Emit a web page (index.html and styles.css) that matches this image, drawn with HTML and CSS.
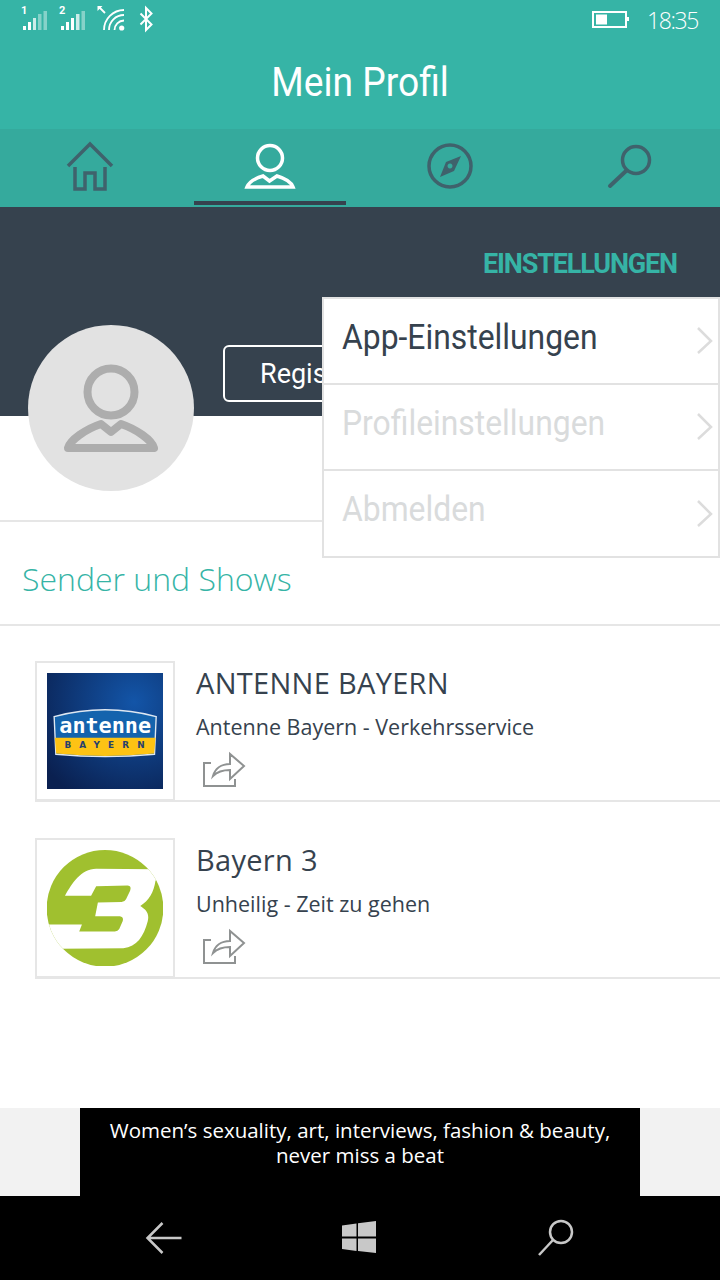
FILE: index.html
```html
<!DOCTYPE html>
<html lang="de">

<head>
    <meta charset="UTF-8">
    <meta name="viewport" content="width=device-width, initial-scale=1.0">
    <title>Mein Profil</title>
    <link rel="stylesheet" href="styles.css">
</head>

<body>
    <div class="page">
        <div class="top">
            <div class="status">
                <svg class="status-left" viewBox="0 0 160 40">
                    <g class="signal">
                        <text x="21" y="14">1</text>
                        <rect x="23" y="26" width="3" height="4" />
                        <rect x="28" y="22" width="3" height="8" />
                        <rect x="33" y="18" width="3" height="12" opacity=".75" />
                        <rect x="38" y="14" width="3.500" height="16" opacity=".4" />
                        <rect x="43.500" y="11" width="3.500" height="19" opacity=".4" />
                    </g>
                    <g class="signal">
                        <text x="59" y="14">2</text>
                        <rect x="61" y="26" width="3" height="4" />
                        <rect x="66" y="22" width="3" height="8" />
                        <rect x="71" y="18" width="3" height="12" />
                        <rect x="76" y="14" width="3.500" height="16" opacity=".75" />
                        <rect x="81.500" y="11" width="3.500" height="19" opacity=".4" />
                    </g>
                    <g fill="none" stroke="#fff" stroke-width="1.800">
                        <path d="M104 30a20 20 0 0 1 20-20" />
                        <path d="M109 30a15 15 0 0 1 15-15" />
                        <path d="M114.500 30a9.500 9.500 0 0 1 9.500-9.500" />
                        <path d="M105 13l-6-6" />
                        <path d="M140.500 13.500L151.500 24.500 146 30V8l5.500 5.500L140.500 24.500" stroke-width="2" />
                    </g>
                    <path d="M97.500 6h5l-5 5z" fill="#fff" />
                    <circle cx="121.700" cy="28" r="2.600" fill="#fff" />
                </svg>
                <div class="status-right">
                    <svg class="battery" viewBox="0 0 38 18">
                        <rect x="1" y="1" width="33" height="15" fill="none" stroke="#fff" stroke-width="2" />
                        <rect x="4" y="3.500" width="11" height="10" fill="#fff" />
                        <rect x="35" y="6" width="2" height="4" fill="#fff" />
                    </svg>
                    <span class="time">18:35</span>
                </div>
            </div>
            <h1 class="page-title">Mein Profil</h1>
        </div>

        <div class="tabs">
            <div class="tab">
                <svg viewBox="60 140 60 54" class="tab-icon dark">
                    <path d="M68 166l22-22 22 22" />
                    <path d="M75 167v22h10v-16h10v16h10v-22" />
                </svg>
            </div>
            <div class="tab active">
                <svg viewBox="240 140 60 54" class="tab-icon light">
                    <circle cx="270" cy="158" r="12.500" />
                    <path d="M247 187c2-5 9-9 16-11l6.500 5 7.500-5c7 2 14 6 16 11z" />
                </svg>
            </div>
            <div class="tab">
                <svg viewBox="420 140 60 54" class="tab-icon dark">
                    <circle cx="450" cy="166" r="21" />
                    <path class="needle" d="M461 156l-7 15-14 6 6-15zM450 163.500a2.500 2.500 0 1 0 .01 0z" />
                </svg>
            </div>
            <div class="tab">
                <svg viewBox="600 140 60 54" class="tab-icon dark">
                    <circle cx="636" cy="160" r="13.500" />
                    <path d="M626 171l-16 15" stroke-linecap="round" stroke-width="4" />
                </svg>
            </div>
        </div>

        <div class="profile">
            <div class="profile-head">
                <a class="settings-link">EINSTELLUNGEN</a>
                <button class="register">Registrieren</button>
            </div>
            <div class="avatar">
                <svg viewBox="0 0 166 166">
                    <circle cx="83" cy="67" r="23.500" />
                    <path d="M40 123c2-8 18-19 33-24l10 8 10-8c15 5 31 16 33 24z" />
                </svg>
            </div>
        </div>

        <h2 class="section-title">Sender und Shows</h2>

        <div class="shows">
            <div class="show">
                <div class="show-logo">
                    <svg viewBox="24 17 341 341">
                        <defs>
                            <radialGradient id="navy" cx="75%" cy="25%" r="95%">
                                <stop offset="0" stop-color="#1355a8" />
                                <stop offset="1" stop-color="#0a2050" />
                            </radialGradient>
                        </defs>
                        <rect x="24" y="17" width="341" height="341" fill="url(#navy)" />
                        <path d="M45 145Q195 105 345 145L340 256Q195 270 50 256Z" fill="#1463ad" stroke="#dfe8f2" stroke-width="4" />
                        <path d="M47 207H343L339 254Q195 268 51 254Z" fill="#fdc314" />
                        <text class="logo-word" x="195" y="192">antenne</text>
                        <text class="logo-sub" x="205" y="238">BAYERN</text>
                    </svg>
                </div>
                <div class="show-info">
                    <div class="show-name">ANTENNE BAYERN</div>
                    <div class="show-track">Antenne Bayern - Verkehrsservice</div>
                    <svg class="share" viewBox="200 750 48 38">
                        <path d="M211 762h-7v23h31v-7" />
                        <path d="M213 775c2-7 8-12 17-12v-10l14 12-14 13v-9c-8 0-13 2-17 6z" />
                    </svg>
                </div>
            </div>
            <div class="show">
                <div class="show-logo">
                    <svg viewBox="25 15 342 342">
                        <defs>
                            <clipPath id="disc">
                                <circle cx="196" cy="187" r="172" />
                            </clipPath>
                        </defs>
                        <circle cx="196" cy="187" r="172" fill="#a0c02f" />
                        <path clip-path="url(#disc)" fill="#fff" d="M340 72L170 70C125 72 100 110 78 150H155L170 122L262 120Q275 120 270 135L258 160Q254 168 245 168L175 170L167 210L240 210Q252 212 248 225L238 248Q234 255 225 255H120L128 235H20L60 306L250 305C290 300 310 270 322 225C328 200 315 190 300 180C325 165 340 140 345 105L400 90Z" />
                    </svg>
                </div>
                <div class="show-info">
                    <div class="show-name">Bayern 3</div>
                    <div class="show-track">Unheilig - Zeit zu gehen</div>
                    <svg class="share" viewBox="200 750 48 38">
                        <path d="M211 762h-7v23h31v-7" />
                        <path d="M213 775c2-7 8-12 17-12v-10l14 12-14 13v-9c-8 0-13 2-17 6z" />
                    </svg>
                </div>
            </div>
        </div>

        <div class="ad">
            <div class="ad-box">Women&rsquo;s sexuality, art, interviews, fashion &amp; beauty, never miss a beat</div>
        </div>

        <div class="navbar">
            <svg viewBox="0 0 40 40" class="nav-icon">
                <path d="M37.500 20H3.500M18.500 5L3.500 20l15 15" />
            </svg>
            <svg viewBox="0 0 40 40" class="nav-icon">
                <path class="win" d="M2 7.500L16.500 5.500V18.500H2zM18 5.300L36 3V18.500H18zM2 20.500H16.500V33L2 31zM18 20.500H36V35L18 33z" />
            </svg>
            <svg viewBox="0 0 40 40" class="nav-icon">
                <circle cx="25" cy="14" r="11" />
                <path d="M17 22L3 37" />
            </svg>
        </div>

        <div class="menu">
            <div class="menu-item">
                <span>App-Einstellungen</span>
                <svg class="chevron" viewBox="0 0 16 28"><path d="M1 1l13 13L1 26" /></svg>
            </div>
            <div class="menu-item off">
                <span>Profileinstellungen</span>
                <svg class="chevron" viewBox="0 0 16 28"><path d="M1 1l13 13L1 26" /></svg>
            </div>
            <div class="menu-item off">
                <span>Abmelden</span>
                <svg class="chevron" viewBox="0 0 16 28"><path d="M1 1l13 13L1 26" /></svg>
            </div>
        </div>
    </div>
</body>

</html>
```

FILE: styles.css
```css
body {
    margin: 0;
    background: #ffffff;
    font-family: "Open Sans", sans-serif;
}

.page {
    position: relative;
    display: flex;
    flex-direction: column;
    width: 720px;
    height: 1280px;
    overflow: hidden;
}

.top {
    height: 129px;
    background-color: #36b4a6;
}

.status {
    display: flex;
    justify-content: space-between;
    height: 40px;
}

.status-left {
    width: 160px;
    height: 40px;
}

.signal {
    fill: #ffffff;
}

.signal text {
    font-family: "Roboto", sans-serif;
    font-size: 11px;
    font-weight: 700;
}

.status-right {
    display: flex;
    align-items: center;
    gap: 17px;
    padding-right: 22px;
}

.battery {
    width: 38px;
    height: 18px;
}

.time {
    color: #ffffff;
    font-size: 23px;
    font-weight: 300;
    letter-spacing: -1.400px;
}

.page-title {
    margin: 0;
    color: #ffffff;
    font-family: "Roboto", sans-serif;
    font-size: 40px;
    font-weight: 400;
    line-height: 86px;
    text-align: center;
    transform: scaleX(0.93);
}

.tabs {
    display: grid;
    grid-template-columns: repeat(4, 1fr);
    height: 78px;
    background-color: #35aa9d;
    border-bottom: 1px solid #36424e;
}

.tab {
    display: flex;
    flex-direction: column;
    align-items: center;
    gap: 7px;
    padding-top: 11px;
}

.tab-icon {
    width: 60px;
    height: 54px;
    fill: none;
    stroke-width: 3.500;
}

.tab-icon.dark {
    stroke: #3f626c;
}

.tab-icon.light {
    stroke: #ffffff;
}

.needle {
    fill: #3f626c;
    stroke: none;
    fill-rule: evenodd;
}

.tab.active::after {
    content: "";
    width: 152px;
    height: 4px;
    background-color: #36424e;
}

.profile {
    position: relative;
    height: 312px;
    border-bottom: 2px solid #e6e6e6;
}

.profile-head {
    height: 208px;
    background-color: #36424e;
    overflow: hidden;
}

.settings-link {
    display: block;
    padding: 37px 43px 0 0;
    color: #36b4a6;
    font-family: "Roboto", sans-serif;
    font-size: 27px;
    font-weight: 700;
    letter-spacing: -1.150px;
    line-height: 38px;
    text-align: right;
}

.register {
    display: block;
    width: 220px;
    height: 57px;
    margin: 62px 0 0 223px;
    padding: 0 0 0 35px;
    background: none;
    border: 2px solid #ffffff;
    border-radius: 6px;
    color: #ffffff;
    font-family: "Roboto", sans-serif;
    font-size: 27px;
    text-align: left;
}

.avatar {
    position: absolute;
    top: 117px;
    left: 28px;
    width: 166px;
    height: 166px;
    background-color: #e2e2e2;
    border-radius: 50%;
}

.avatar svg {
    display: block;
    fill: none;
    stroke: #adadad;
    stroke-width: 8;
    stroke-linejoin: round;
}

.section-title {
    flex: none;
    box-sizing: border-box;
    height: 104px;
    margin: 0;
    padding-left: 22px;
    border-bottom: 2px solid #e6e6e6;
    color: #36b4a6;
    font-size: 32px;
    font-weight: 300;
    line-height: 114px;
}

.shows {
    display: flex;
    flex: 1;
    flex-direction: column;
    gap: 36px;
    padding: 35px 0 0 35px;
}

.show {
    display: flex;
    height: 141px;
    border-bottom: 2px solid #e6e6e6;
    box-sizing: border-box;
}

.show-logo {
    box-sizing: border-box;
    width: 140px;
    height: 141px;
    padding: 10px;
    border: 2px solid #e6e6e6;
    border-bottom-width: 3px;
}

.show-logo svg {
    display: block;
    width: 116px;
    height: 116px;
}

.logo-word {
    fill: #ffffff;
    font-family: "DejaVu Sans Mono", monospace;
    font-size: 64px;
    font-weight: 700;
    text-anchor: middle;
}

.logo-sub {
    fill: #27406e;
    font-family: "DejaVu Sans", sans-serif;
    font-size: 26px;
    font-weight: 700;
    letter-spacing: 24px;
    text-anchor: middle;
}

.show-info {
    display: flex;
    flex-direction: column;
    align-items: flex-start;
    padding-left: 21px;
    color: #36424e;
}

.show-name {
    margin-top: -1px;
    font-size: 29px;
    letter-spacing: 0.300px;
    line-height: 46px;
}

.show-track {
    margin-top: 6px;
    font-size: 21.500px;
    line-height: 30px;
}

.share {
    width: 48px;
    height: 38px;
    margin: 9px 0 0 4px;
    fill: none;
    stroke: #8f9292;
    stroke-width: 2;
}

.ad {
    display: flex;
    justify-content: center;
    height: 88px;
    background-color: #f2f2f2;
}

.ad-box {
    box-sizing: border-box;
    width: 560px;
    padding: 10px 20px 0;
    background-color: #000000;
    color: #ffffff;
    font-size: 20.500px;
    line-height: 25px;
    text-align: center;
}

.navbar {
    display: grid;
    grid-template-columns: repeat(3, 40px);
    justify-content: center;
    column-gap: 156px;
    align-items: center;
    height: 84px;
    background-color: #000000;
}

.nav-icon {
    width: 40px;
    height: 40px;
    fill: none;
    stroke: #c8c8c8;
    stroke-width: 2.500;
}

.win {
    fill: #c8c8c8;
    stroke: none;
}

.menu {
    position: absolute;
    top: 297px;
    left: 322px;
    box-sizing: border-box;
    width: 398px;
    background-color: #ffffff;
    border: 2px solid #e2e2e2;
}

.menu-item {
    display: flex;
    justify-content: space-between;
    align-items: center;
    height: 86px;
    box-sizing: border-box;
    padding: 0 5px 0 18px;
    border-bottom: 2px solid #e2e2e2;
    color: #36424e;
    font-family: "Roboto", sans-serif;
    font-size: 35px;
}

.menu-item span {
    margin-bottom: 8px;
    transform: scaleX(0.91);
    transform-origin: left;
}

.menu-item:last-child {
    height: 85px;
    border-bottom: none;
}

.menu-item.off {
    color: #d9dbdc;
}

.chevron {
    width: 16px;
    height: 28px;
    fill: none;
    stroke: #dcdcdc;
    stroke-width: 2.500;
}
```
